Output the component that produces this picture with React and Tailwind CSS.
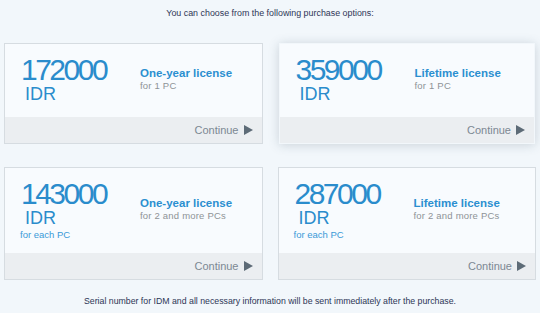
import React from "react";

const cards = [
  { price: "172000", title: "One-year license", sub: "for 1 PC", each: false, hover: false },
  { price: "359000", title: "Lifetime license", sub: "for 1 PC", each: false, hover: true },
  { price: "143000", title: "One-year license", sub: "for 2 and more PCs", each: true, hover: false },
  { price: "287000", title: "Lifetime license", sub: "for 2 and more PCs", each: true, hover: false },
];

function Card({ c }) {
  return (
    <div
      className={
        "flex flex-col border " +
        (c.hover
          ? "border-transparent shadow-[0_1px_10px_rgba(60,80,100,0.22)] mx-[1px]"
          : "border-[#d6dce1]")
      }
    >
      <div className="flex bg-[#f8fbfe] pt-[11px] pb-[14px]">
        <div className="w-[119px] pl-[15px] flex flex-col">
          <div className="text-[30px] leading-[30px] tracking-[-2.5px] text-[#2a8ccc] pl-[1px]">{c.price}</div>
          <div className="text-[18px] leading-[18px] text-[#2a8ccc] pl-[5px]">IDR</div>
          {c.each && (
            <div className="text-[9.5px] leading-[9px] mt-[3px] text-[#3a9ad8]">for each PC</div>
          )}
        </div>
        <div className="flex flex-col justify-center pl-[16px]">
          <div className="text-[11.5px] leading-[13px] font-bold text-[#2b8fd0]">{c.title}</div>
          <div className="text-[9.5px] leading-[11px] text-[#8e9397] tracking-[0.2px]">{c.sub}</div>
        </div>
      </div>
      <div className="h-[26px] bg-[#ebeef1] flex items-center justify-end pr-[9px] gap-[5px]">
        <span className="text-[11px] text-[#7c8893]">Continue</span>
        <svg width="9" height="10" viewBox="0 0 9 10">
          <path d="M0 0 L9 5 L0 10 Z" fill="#5d6b77" />
        </svg>
      </div>
    </div>
  );
}

export default function App() {
  return (
    <div
      className="w-[540px] h-[313px] bg-[#f2f7fb] overflow-hidden flex flex-col"
      style={{ fontFamily: '"Liberation Sans", Arial, sans-serif' }}
    >
      <div className="text-center text-[8.9px] leading-[12px] text-[#2d3656] pt-[7px]">
        You can choose from the following purchase options:
      </div>
      <div className="grid grid-cols-2 gap-x-[15px] gap-y-[23px] px-[4px] mt-[24px]">
        {cards.map((c, i) => (
          <Card key={i} c={c} />
        ))}
      </div>
      <div className="text-center text-[8.75px] leading-[12px] text-[#2d3656] mt-[15px]">
        Serial number for IDM and all necessary information will be sent immediately after the purchase.
      </div>
    </div>
  );
}
